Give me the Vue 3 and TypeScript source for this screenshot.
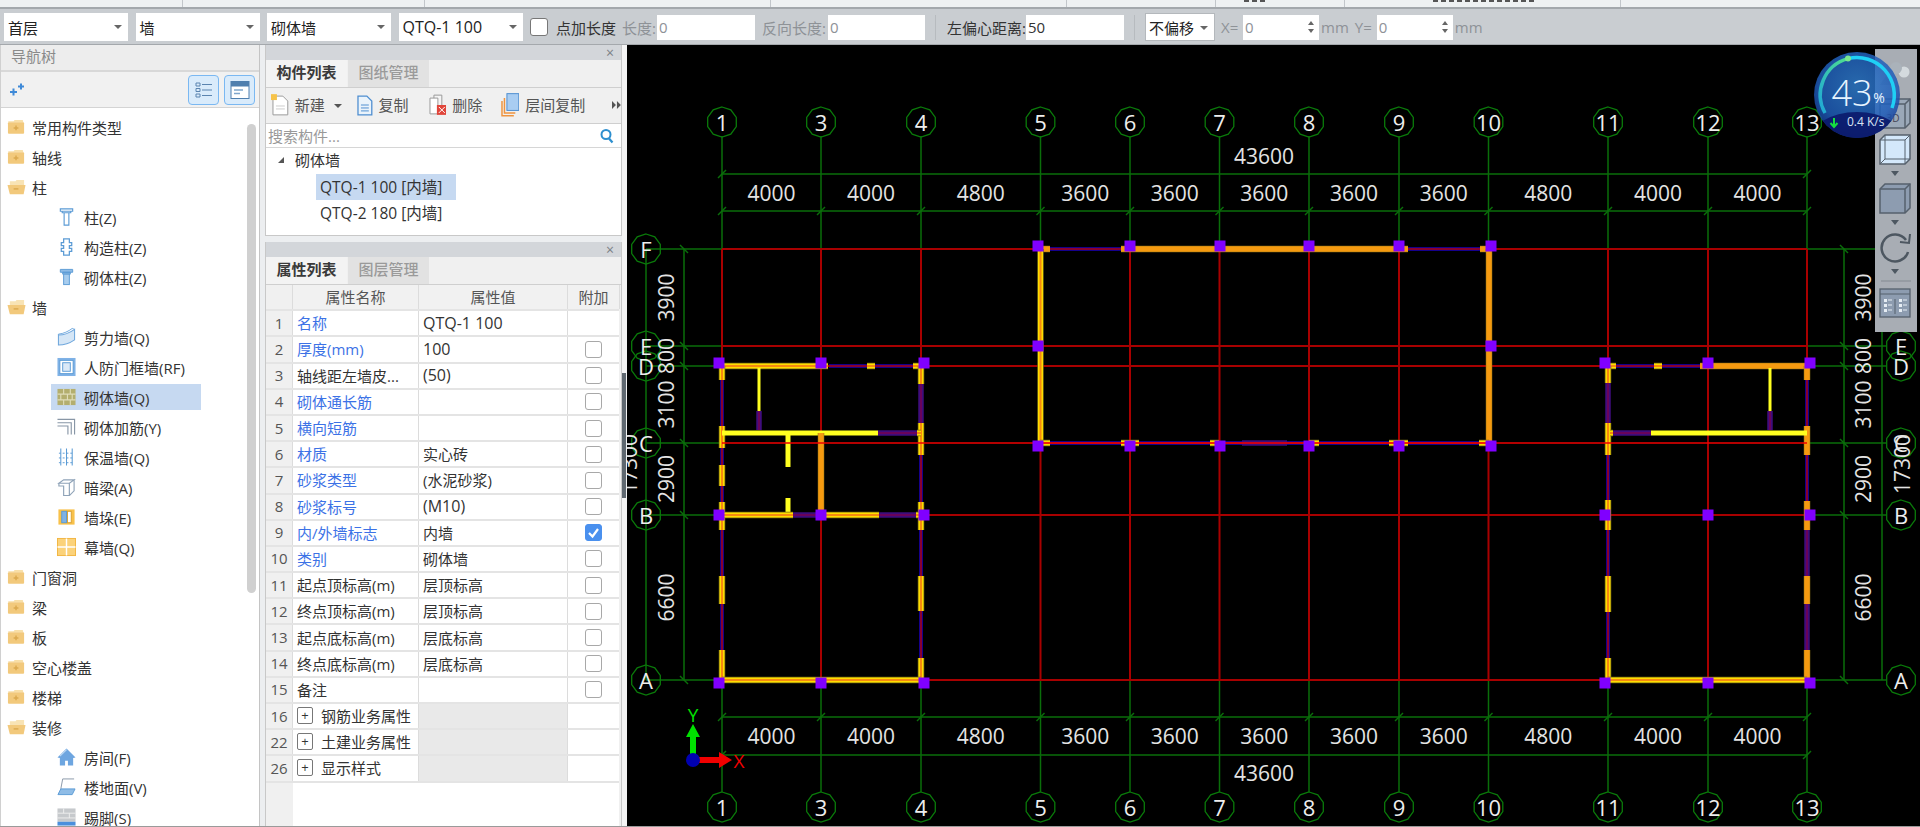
<script setup lang="ts">
interface TreeItem {
  label: string;
  icon: string;
  child?: boolean;
  active?: boolean;
}

interface PropRow {
  no: number;
  name: string;
  value?: string;
  latin?: boolean;
  link?: boolean;
  box?: boolean;
  checked?: boolean;
  group?: boolean;
}

type WallKind = "o" | "a" | "y" | "t" | "b" | "p";
type Wall = [WallKind, number, number, number, number];

const folderBase =
  '<path d="M1 5a1 1 0 0 1 1-1h5l1-1.500h8a1 1 0 0 1 1 1V5z" fill="#f8dfa8"/>';
const icons: Record<string, string> = {
  closed:
    folderBase +
    '<rect x="1" y="5" width="17" height="12" rx="1" fill="#f2c97c"/><path d="M7 11h5M9.500 8.500v5" stroke="#dba94e" stroke-width="1.500"/>',
  open:
    '<path d="M3 4h6l1-1.500h8V8H3z" fill="#f8e3b4"/><path d="M0.500 8h19l-2 9.500H3z" fill="#f2c97c"/><path d="M7 12h5" stroke="#dba94e" stroke-width="1.500"/>',
  col: '<path d="M3.500 1.500h13v2.500h-13zM5.500 4h9v1.500h-9zM7.500 5.500V18.500h5V5.500" fill="none" stroke="#5b9bd5" stroke-width="1.200"/>',
  gz: '<path d="M7 1.500h6v4h2.500v3H13v3h2.500v3H13v4H7v-4H4.500v-3H7v-3H4.500v-3H7z" fill="#fff" stroke="#5b9bd5" stroke-width="1.300"/>',
  qc: '<path d="M3.500 2h13v3h-13zM6 5h8v2H6z" fill="#8fbce6" stroke="#5b9bd5"/><rect x="7" y="7" width="6" height="11" fill="#a8cdee" stroke="#5b9bd5"/>',
  shear:
    '<path d="M1.500 8C7 8 13 6 18.500 2v11c-5 3.500-11 5.500-17 5.500z" fill="#d5e6f6" stroke="#6ea6dc" stroke-width="1.100"/><path d="M1.500 8v-1C7 6.500 12 4 16 1l2.500 1" fill="none" stroke="#6ea6dc"/>',
  rf: '<rect x="0.500" y="0.500" width="19" height="19" fill="#7fb2e6"/><rect x="3" y="3" width="14" height="14" fill="#fff" stroke="#5b9bd5"/><rect x="6" y="5.500" width="8" height="9" fill="#dbe9f7" stroke="#5b9bd5"/>',
  brick:
    '<rect x="0.500" y="1.500" width="19" height="17" fill="#b3ae6e"/><path d="M0.500 7h19M0.500 13h19M7 1.500V7M14 1.500V7M4 7v6M11 7v6M16 7v6M7 13v5.500M14 13v5.500" stroke="#dfdcb8" stroke-width="1.200"/>',
  rebar:
    '<path d="M0.500 2h18v16M0.500 5.500h14.500V18M0.500 9h11v9" fill="none" stroke="#8896a6" stroke-width="1.200"/>',
  insul:
    '<path d="M4 1v18M10 1v18M16 1v18" stroke="#5b9bd5" stroke-width="1.100"/><path d="M2 6h16M2 11h16M2 16h16" stroke="#5b9bd5" stroke-dasharray="2 2"/>',
  dark: '<path d="M2 6l5-3.500h11L13 6zM2 6h11v13H7V9H2zM13 6l5-3.500V14l-5 5" fill="#fff" stroke="#8fa3b8" stroke-width="1.200"/>',
  pier: '<rect x="1.500" y="2" width="17" height="16" fill="#f8c14a"/><rect x="5" y="4" width="5" height="12" fill="#7fb2e6" stroke="#5b9bd5"/><rect x="11" y="4" width="4" height="12" fill="#fff" stroke="#d9a030"/>',
  curtain:
    '<rect x="0.500" y="1" width="19" height="18" fill="#fbd27a" stroke="#f2b53e"/><path d="M10 1v18M0.500 10h19" stroke="#fff" stroke-width="1.500"/>',
  room: '<path d="M10 1L0.500 10.500 3 11V19h5.500v-5h3v5H17v-8l2.500-.500z" fill="#6ea6e0"/><path d="M3 9l7-7" stroke="#b9d6f2" stroke-width="1.500"/>',
  floor:
    '<path d="M6 1.500h12M6 1.500L4 12" fill="none" stroke="#8896a6"/><path d="M4 12h15l-3 6H1z" fill="#8fbce6" stroke="#5b9bd5"/>',
  skirt:
    '<rect x="0.500" y="1" width="19" height="14" fill="#c6c9cc"/><path d="M0.500 6h19M0.500 11h19M7 1v5M13 6v5" stroke="#eee"/><rect x="0.500" y="15" width="19" height="4" fill="#4a8fdc"/>',
};

const tree: TreeItem[] = [
  { label: "常用构件类型", icon: "closed" },
  { label: "轴线", icon: "closed" },
  { label: "柱", icon: "open" },
  { label: "柱(Z)", icon: "col", child: true },
  { label: "构造柱(Z)", icon: "gz", child: true },
  { label: "砌体柱(Z)", icon: "qc", child: true },
  { label: "墙", icon: "open" },
  { label: "剪力墙(Q)", icon: "shear", child: true },
  { label: "人防门框墙(RF)", icon: "rf", child: true },
  { label: "砌体墙(Q)", icon: "brick", child: true, active: true },
  { label: "砌体加筋(Y)", icon: "rebar", child: true },
  { label: "保温墙(Q)", icon: "insul", child: true },
  { label: "暗梁(A)", icon: "dark", child: true },
  { label: "墙垛(E)", icon: "pier", child: true },
  { label: "幕墙(Q)", icon: "curtain", child: true },
  { label: "门窗洞", icon: "closed" },
  { label: "梁", icon: "closed" },
  { label: "板", icon: "closed" },
  { label: "空心楼盖", icon: "closed" },
  { label: "楼梯", icon: "closed" },
  { label: "装修", icon: "open" },
  { label: "房间(F)", icon: "room", child: true },
  { label: "楼地面(V)", icon: "floor", child: true },
  { label: "踢脚(S)", icon: "skirt", child: true },
];

const props: PropRow[] = [
  { no: 1, name: "名称", value: "QTQ-1 100", latin: true, link: true },
  { no: 2, name: "厚度(mm)", value: "100", latin: true, link: true, box: true },
  { no: 3, name: "轴线距左墙皮...", value: "(50)", latin: true, box: true },
  { no: 4, name: "砌体通长筋", link: true, box: true },
  { no: 5, name: "横向短筋", link: true, box: true },
  { no: 6, name: "材质", value: "实心砖", link: true, box: true },
  { no: 7, name: "砂浆类型", value: "(水泥砂浆)", link: true, box: true },
  { no: 8, name: "砂浆标号", value: "(M10)", latin: true, link: true, box: true },
  { no: 9, name: "内/外墙标志", value: "内墙", link: true, box: true, checked: true },
  { no: 10, name: "类别", value: "砌体墙", link: true, box: true },
  { no: 11, name: "起点顶标高(m)", value: "层顶标高", box: true },
  { no: 12, name: "终点顶标高(m)", value: "层顶标高", box: true },
  { no: 13, name: "起点底标高(m)", value: "层底标高", box: true },
  { no: 14, name: "终点底标高(m)", value: "层底标高", box: true },
  { no: 15, name: "备注", box: true },
  { no: 16, name: "钢筋业务属性", group: true },
  { no: 22, name: "土建业务属性", group: true },
  { no: 26, name: "显示样式", group: true },
];

// drawing coordinates are page pixels, the svg viewBox starts at the canvas corner
const axisX: [string, number][] = [
  ["1", 722], ["3", 821], ["4", 921], ["5", 1040.5], ["6", 1130], ["7", 1219.5],
  ["8", 1309], ["9", 1399], ["10", 1488.5], ["11", 1608], ["12", 1708], ["13", 1807],
];
const axisY: [string, number][] = [
  ["F", 249], ["E", 346], ["D", 366], ["C", 443], ["B", 515], ["A", 680],
];
const spansX = ["4000", "4000", "4800", "3600", "3600", "3600", "3600", "3600", "4800", "4000", "4000"];
const spansY = ["3900", "800", "3100", "2900", "6600"];

const dimX = spansX.map((label, i) => ({
  label,
  x: (axisX[i][1] + axisX[i + 1][1]) / 2,
}));
const dimY = spansY.map((label, i) => ({
  label,
  y: (axisY[i][1] + axisY[i + 1][1]) / 2,
}));

function bubble(cx: number, cy: number): string {
  const pts: string[] = [];
  for (let i = 0; i < 10; i++) {
    const a = (Math.PI * 2 * i) / 10 - Math.PI / 2;
    pts.push(`${(cx + 15 * Math.cos(a)).toFixed(1)},${(cy + 15 * Math.sin(a)).toFixed(1)}`);
  }
  return pts.join(" ");
}

const walls: Wall[] = [
  // left block
  ["o", 720, 366, 828, 366], ["b", 829, 366, 867, 366], ["o", 867, 366, 875, 366],
  ["b", 875, 366, 913, 366], ["o", 913, 366, 921, 366],
  ["o", 722, 366, 722, 380], ["b", 722, 380, 722, 426], ["o", 722, 426, 722, 448],
  ["b", 722, 448, 722, 465], ["o", 722, 465, 722, 486], ["b", 722, 486, 722, 502],
  ["o", 722, 502, 722, 530], ["b", 722, 530, 722, 576], ["o", 722, 576, 722, 604],
  ["b", 722, 604, 722, 650], ["o", 722, 650, 722, 680],
  ["o", 921, 366, 921, 384], ["p", 921, 384, 921, 423], ["o", 921, 423, 921, 455],
  ["b", 921, 455, 921, 502], ["o", 921, 502, 921, 530], ["b", 921, 530, 921, 576],
  ["o", 921, 576, 921, 611], ["b", 921, 611, 921, 658], ["o", 921, 658, 921, 680],
  ["y", 722, 433, 878, 433], ["p", 878, 433, 917, 433], ["o", 917, 433, 921, 433],
  ["t", 759, 368, 759, 411], ["p", 759, 411, 759, 430],
  ["y", 788, 433, 788, 467], ["y", 788, 498, 788, 515],
  ["a", 821, 433, 821, 515],
  ["o", 722, 515, 793, 515], ["p", 793, 515, 817, 515], ["o", 825, 515, 879, 515],
  ["p", 879, 515, 916, 515], ["o", 916, 515, 921, 515],
  ["o", 722, 680, 921, 680],
  // middle block
  ["a", 1040, 249, 1050, 249], ["b", 1050, 249, 1121, 249], ["a", 1121, 249, 1408, 249],
  ["b", 1408, 249, 1480, 249], ["a", 1480, 249, 1491, 249],
  ["o", 1040.5, 249, 1040.5, 443], ["a", 1489, 249, 1489, 443],
  ["b", 1040, 443, 1489, 443], ["o", 1040, 443, 1050, 443], ["o", 1121, 443, 1139, 443],
  ["o", 1210, 443, 1219, 443], ["p", 1242, 443, 1287, 443], ["o", 1309, 443, 1319, 443],
  ["o", 1389, 443, 1408, 443], ["o", 1479, 443, 1489, 443],
  // right block
  ["o", 1608, 366, 1616, 366], ["b", 1616, 366, 1654, 366], ["o", 1654, 366, 1662, 366],
  ["b", 1662, 366, 1700, 366], ["a", 1700, 366, 1809, 366],
  ["o", 1608, 366, 1608, 383], ["p", 1608, 383, 1608, 423], ["o", 1608, 423, 1608, 455],
  ["b", 1608, 455, 1608, 500], ["o", 1608, 500, 1608, 530], ["b", 1608, 530, 1608, 576],
  ["o", 1608, 576, 1608, 612], ["b", 1608, 612, 1608, 658], ["o", 1608, 658, 1608, 680],
  ["a", 1807, 366, 1807, 380], ["b", 1807, 380, 1807, 426], ["a", 1807, 426, 1807, 455],
  ["b", 1807, 455, 1807, 501], ["a", 1807, 501, 1807, 530], ["p", 1807, 530, 1807, 576],
  ["a", 1807, 576, 1807, 604], ["p", 1807, 604, 1807, 650], ["a", 1807, 650, 1807, 680],
  ["o", 1610, 433, 1613, 433], ["p", 1613, 433, 1651, 433], ["y", 1651, 433, 1807, 433],
  ["t", 1770, 368, 1770, 411], ["p", 1770, 411, 1770, 430],
  ["o", 1608, 680, 1807, 680],
];

// outer edge first, the core last; blue and purple keep the axis line visible through them
const wallStyle: Record<WallKind, [string, number][]> = {
  o: [["#7a7010", 6.5], ["#ffdc00", 5], ["#f58a10", 2]],
  a: [["#8a7014", 6.5], ["#f59a10", 5.5]],
  y: [["#ffff20", 5]],
  t: [["#ffff20", 3]],
  b: [["#14008c", 4], ["#b00010", 1.5]],
  p: [["#3f0d7d", 5.5], ["#7a0050", 1.5]],
};

const wallStrokes = walls.flatMap(([kind, x1, y1, x2, y2]) =>
  wallStyle[kind].map(([color, width]) => ({ x1, y1, x2, y2, color, width })),
);

const pillars: [number, number][] = [
  [1038, 246], [1130, 246], [1220, 246], [1309, 246], [1399, 246], [1491, 246],
  [1038, 346], [1491, 346],
  [1038, 446], [1130, 446], [1220, 446], [1309, 446], [1399, 446], [1491, 446],
  [719, 363], [821, 363], [924, 363], [719, 515], [821, 515], [924, 515],
  [719, 683], [821, 683], [924, 683],
  [1605, 363], [1708, 363], [1810, 363], [1605, 515], [1708, 515], [1810, 515],
  [1605, 683], [1708, 683], [1810, 683],
];
</script>

<template>
  <div class="app">
    <div class="topband">
      <i class="sep s1"></i><i class="sep s2"></i><i class="sep s3"></i><i class="sep s4"></i>
      <b class="clip c1"></b><i class="sep s5"></i><i class="sep s6"></i><b class="clip c2"></b><i class="sep s7"></i>
    </div>

    <div class="toolbar">
      <div class="combo">首层<span class="caret"></span></div>
      <div class="combo">墙<span class="caret"></span></div>
      <div class="combo">砌体墙<span class="caret"></span></div>
      <div class="combo wide-latin">QTQ-1 100<span class="caret"></span></div>
      <span class="tool-check"></span>
      <span class="lab point-lab">点加长度</span>
      <span class="lab off len-lab">长度:</span>
      <div class="field f98 off-val">0</div>
      <span class="lab off rev-lab">反向长度:</span>
      <div class="field f97 off-val">0</div>
      <i class="divider d1"></i>
      <span class="lab off-lab">左偏心距离:</span>
      <div class="field f98">50</div>
      <i class="divider d2"></i>
      <div class="combo small">不偏移<span class="caret"></span></div>
      <span class="lab off xy-lab">X=</span>
      <div class="field spin off-val">0<span class="spinner"><i></i><i></i></span></div>
      <span class="lab off mm-lab">mm</span>
      <span class="lab off xy-lab">Y=</span>
      <div class="field spin off-val">0<span class="spinner"><i></i><i></i></span></div>
      <span class="lab off mm-lab">mm</span>
    </div>

    <div class="main">
      <aside class="nav">
        <div class="nav-title">导航树</div>
        <div class="nav-tools">
          <svg class="sparkle" width="16" height="16" viewBox="0 0 16 16">
            <path d="M1 10h7M4.500 6.500v7M9 4.500h6M12 1.500v6" stroke="#3f8ad8" stroke-width="2" />
          </svg>
          <button class="view-btn first">
            <svg width="18" height="18" viewBox="0 0 18 18">
              <path
                d="M1 2h4v3H1zM1 7.500h4v3H1zM1 13h4v3H1zM7 3.500h10M7 9h10M7 14.500h10"
                fill="none"
                stroke="#5a84b0"
              />
            </svg>
          </button>
          <button class="view-btn">
            <svg width="20" height="20" viewBox="0 0 20 20">
              <rect x="1" y="1.500" width="18" height="17" fill="#fff" stroke="#4f7fae" />
              <rect x="1" y="1.500" width="18" height="5" fill="#4f7fae" />
              <path d="M4 10h9M4 13.500h6" stroke="#7fa6cc" stroke-width="1.500" />
            </svg>
          </button>
        </div>
        <div class="nav-tree">
          <div v-for="item in tree" :key="item.label" class="tree-row" :class="{ child: item.child }">
            <div class="tree-item" :class="{ active: item.active }">
              <svg class="tree-icon" viewBox="0 0 20 20" v-html="icons[item.icon]"></svg>
              <span>{{ item.label }}</span>
            </div>
          </div>
          <div class="scroll-thumb"></div>
        </div>
      </aside>

      <section class="side">
        <div class="panel list-panel">
          <div class="panel-head">×</div>
          <div class="tabs">
            <span class="tab on">构件列表</span>
            <span class="tab">图纸管理</span>
          </div>
          <div class="list-tools">
            <svg class="t-new" width="18" height="22" viewBox="0 0 18 22">
              <path d="M2 2h10l5 5v14H2z" fill="#fff" stroke="#9a9a9a" />
              <path d="M5 12h9M5 15h9" stroke="#ccc" />
              <rect x="0" y="0" width="6" height="6" fill="#f6c34a" />
            </svg>
            <span class="tool-text">新建</span>
            <span class="caret dark"></span>
            <svg class="t-copy" width="16" height="22" viewBox="0 0 16 22">
              <path d="M1 2h9l5 5v14H1z" fill="#eaf3fb" stroke="#4f8ed0" stroke-width="1.300" />
              <path d="M4 11h8M4 14h8M4 17h8" stroke="#4f8ed0" />
            </svg>
            <span class="tool-text">复制</span>
            <svg class="t-del" width="18" height="22" viewBox="0 0 18 22">
              <path d="M5 1h8v15H5z" fill="#f4f4f4" stroke="#999" />
              <path d="M1 4h8v16H1z" fill="#fff" stroke="#999" />
              <rect x="8" y="11" width="10" height="10" fill="#e0453a" />
              <path d="M10 13l6 6M16 13l-6 6" stroke="#fff" />
            </svg>
            <span class="tool-text">删除</span>
            <svg class="t-floor" width="18" height="24" viewBox="0 0 18 24">
              <path d="M1 8v15h12" fill="none" stroke="#ee9440" stroke-width="1.500" />
              <path d="M3.500 5v15h11" fill="none" stroke="#ee9440" stroke-width="1.500" />
              <rect x="6" y="0.500" width="12" height="17" fill="#a9cdf2" stroke="#4f8ed0" />
            </svg>
            <span class="tool-text">层间复制</span>
            <svg class="more" width="9" height="8" viewBox="0 0 9 8">
              <path d="M0 0l4 4-4 4zM5 0l4 4-4 4z" fill="#555" />
            </svg>
          </div>
          <div class="search">
            <span>搜索构件...</span>
            <svg width="14" height="16" viewBox="0 0 14 16">
              <circle cx="6" cy="6.500" r="4.500" fill="none" stroke="#2d8fcf" stroke-width="2" />
              <path d="M9 10.500l3.500 4" stroke="#2d8fcf" stroke-width="2.200" />
            </svg>
          </div>
          <div class="list-tree">
            <div class="list-parent"><span class="tri"></span>砌体墙</div>
            <div class="list-row sel">QTQ-1 100 [内墙]</div>
            <div class="list-row">QTQ-2 180 [内墙]</div>
          </div>
        </div>

        <div class="panel prop-panel">
          <div class="panel-head">×</div>
          <div class="tabs">
            <span class="tab on">属性列表</span>
            <span class="tab">图层管理</span>
          </div>
          <div class="prop-table">
            <div class="prop-row head">
              <div class="no"></div>
              <div>属性名称</div>
              <div>属性值</div>
              <div>附加</div>
            </div>
            <div v-for="row in props" :key="row.no" class="prop-row">
              <div class="no">{{ row.no }}</div>
              <div class="name" :class="{ link: row.link }">
                <span v-if="row.group" class="plus">+</span>{{ row.name }}
              </div>
              <div class="val" :class="{ grouped: row.group, latin: row.latin }">{{ row.value }}</div>
              <div class="add">
                <span v-if="row.box" class="box" :class="{ checked: row.checked }">
                  <svg v-if="row.checked" width="13" height="13" viewBox="0 0 13 13">
                    <path d="M2 7l3.500 3.500L11 3" fill="none" stroke="#fff" stroke-width="2.200" />
                  </svg>
                </span>
              </div>
            </div>
            <div class="prop-fill"></div>
          </div>
        </div>
      </section>

      <div class="splitter"><i></i></div>

      <div class="canvas">
        <svg class="drawing" width="1293" height="781" viewBox="627 45 1293 781">
          <g class="green">
            <template v-for="[name, x] in axisX" :key="name">
              <line :x1="x" y1="136" :x2="x" y2="249" />
              <line :x1="x" y1="680" :x2="x" y2="792" />
              <path :d="`M${x - 4} 215l8 -8`" />
              <path :d="`M${x - 4} 721l8 -8`" />
            </template>
            <template v-for="[name, y] in axisY" :key="name">
              <line x1="646" :y1="y" x2="722" :y2="y" />
              <line x1="1807" :y1="y" x2="1886" :y2="y" />
              <path :d="`M680 ${y - 4}l8 8`" />
              <path :d="`M1840 ${y - 4}l8 8`" />
            </template>
            <line x1="722" y1="174" x2="1807" y2="174" />
            <line x1="722" y1="211" x2="1807" y2="211" />
            <line x1="722" y1="717" x2="1807" y2="717" />
            <line x1="722" y1="755" x2="1807" y2="755" />
            <line x1="646" y1="249" x2="646" y2="680" />
            <line x1="684" y1="249" x2="684" y2="680" />
            <line x1="1844" y1="249" x2="1844" y2="680" />
            <line x1="1882" y1="249" x2="1882" y2="680" />
            <path d="M718 178l8 -8M1803 178l8 -8M718 759l8 -8M1803 759l8 -8" />
          </g>

          <g class="red">
            <line v-for="[name, x] in axisX" :key="name" :x1="x" y1="249" :x2="x" y2="680" />
            <line x1="722" y1="249" x2="1807" y2="249" />
            <line x1="722" y1="346" x2="1807" y2="346" />
            <line x1="722" y1="366" x2="1807" y2="366" />
            <line x1="722" y1="515" x2="1807" y2="515" />
            <line x1="924" y1="680" x2="1605" y2="680" />
          </g>

          <line
            v-for="(w, i) in wallStrokes"
            :key="i"
            :x1="w.x1"
            :y1="w.y1"
            :x2="w.x2"
            :y2="w.y2"
            :stroke="w.color"
            :stroke-width="w.width"
          />

          <line class="axis-bright" x1="722" y1="443" x2="1807" y2="443" />

          <rect
            v-for="[x, y] in pillars"
            :key="`${x}-${y}`"
            class="pillar"
            :x="x - 5.5"
            :y="y - 5.5"
            width="11"
            height="11"
          />

          <g class="bubbles">
            <template v-for="[name, x] in axisX" :key="name">
              <polygon :points="bubble(x, 122)" />
              <polygon :points="bubble(x, 807)" />
            </template>
            <template v-for="[name, y] in axisY" :key="name">
              <polygon :points="bubble(646, y)" />
              <polygon :points="bubble(1901, y)" />
            </template>
          </g>

          <g class="dim">
            <template v-for="[name, x] in axisX" :key="name">
              <text class="tag" :x="x" y="122">{{ name }}</text>
              <text class="tag" :x="x" y="807">{{ name }}</text>
            </template>
            <template v-for="[name, y] in axisY" :key="name">
              <text class="tag" x="646" :y="y">{{ name }}</text>
              <text class="tag" x="1901" :y="y">{{ name }}</text>
            </template>
            <text x="1264" y="156">43600</text>
            <text x="1264" y="773">43600</text>
            <template v-for="d in dimX" :key="d.x">
              <text :x="d.x" y="193">{{ d.label }}</text>
              <text :x="d.x" y="736">{{ d.label }}</text>
            </template>
            <template v-for="d in dimY" :key="d.y">
              <text :transform="`translate(666 ${d.y}) rotate(-90)`">{{ d.label }}</text>
              <text :transform="`translate(1863 ${d.y}) rotate(-90)`">{{ d.label }}</text>
            </template>
            <text transform="translate(629 464) rotate(-90)">17300</text>
            <text transform="translate(1902 464) rotate(-90)">17300</text>
          </g>

          <g class="ucs">
            <path d="M690 760v-23h-4l7 -13 7 13h-4v23z" fill="#00e000" />
            <path d="M693 757h26v-5l13 8 -13 8v-5h-26z" fill="#f00000" />
            <circle cx="693" cy="760" r="7" fill="#0000b0" />
            <text class="axis-y" x="693" y="715">Y</text>
            <text class="axis-x" x="739" y="761">X</text>
          </g>
        </svg>

        <div class="view-tools">
          <svg width="42" height="283" viewBox="0 0 42 283">
            <circle cx="29" cy="23" r="5.500" fill="#d4dade" />
            <circle cx="21" cy="19" r="6" fill="#aab2ba" />
            <path d="M5 36l6 -9 6 9z" fill="#8f979f" />
            <path d="M5 79V55l5 -5h25v24l-5 5z" fill="#9aa8b8" stroke="#55606c" stroke-width="1.500" />
            <path d="M5 55h25v24M30 55l5 -5" fill="none" stroke="#55606c" stroke-width="1.500" />
            <text class="mini" x="18" y="73">3D</text>
            <path d="M5 115V91l5 -5h25v24l-5 5z" fill="#d4e8fb" stroke="#55606c" stroke-width="1.500" />
            <path d="M5 91h25v24M30 91l5 -5M10 86v24h25M5 115l5 -5" fill="none" stroke="#55606c" />
            <path d="M16 122h8l-4 5z" fill="#4d5761" />
            <path d="M5 164V140l5 -5h25v24l-5 5z" fill="#8d9cb0" stroke="#55606c" stroke-width="1.500" />
            <path d="M5 140h25v24M30 140l5 -5" fill="none" stroke="#55606c" stroke-width="1.500" />
            <path d="M16 171h8l-4 5z" fill="#4d5761" />
            <path d="M31 191A13.500 13.500 0 1 0 33 203" fill="none" stroke="#4d5761" stroke-width="2.500" />
            <path d="M25 193l9 1 1 -9" fill="none" stroke="#4d5761" stroke-width="2" />
            <path d="M16 220h8l-4 5z" fill="#4d5761" />
            <path d="M6 232h30" stroke="#838a91" />
            <rect x="5" y="240" width="30" height="28" fill="#8d9cb0" stroke="#55606c" stroke-width="1.300" />
            <path d="M5 245h30M20 250v15" stroke="#55606c" />
            <path d="M9 250h3v3H9zM9 255h3v3H9zM9 260h3v3H9zM24 250h3v3h-3zM24 255h3v3h-3zM24 260h3v3h-3z" fill="#e6edf4" />
            <path d="M13 251h4M13 256h4M13 261h4M28 251h4M28 256h4M28 261h4" stroke="#e6edf4" />
          </svg>
        </div>

        <svg class="speed" width="90" height="90" viewBox="0 0 90 90">
          <defs>
            <radialGradient id="ballFill" cx="50%" cy="40%" r="60%">
              <stop offset="0%" stop-color="#2f7ccb" />
              <stop offset="75%" stop-color="#1f5cb8" />
              <stop offset="100%" stop-color="#163c94" />
            </radialGradient>
            <linearGradient id="ringLeft" x1="0" y1="1" x2="1" y2="0">
              <stop offset="0%" stop-color="#1fa7d8" />
              <stop offset="100%" stop-color="#50e08c" />
            </linearGradient>
            <clipPath id="ballClip"><circle cx="45" cy="45" r="43" /></clipPath>
          </defs>
          <circle cx="45" cy="45" r="43" fill="url(#ballFill)" opacity="0.85" />
          <ellipse cx="45" cy="92" rx="48" ry="30" fill="#0b1a6b" opacity="0.9" clip-path="url(#ballClip)" />
          <path d="M13 63A37.500 37.500 0 0 1 36 8.600" fill="none" stroke="url(#ringLeft)" stroke-width="3.500" />
          <path d="M36 8.600A37.500 37.500 0 0 1 80 58" fill="none" stroke="#1fd0f5" stroke-width="3.500" />
          <circle cx="36" cy="8.600" r="3" fill="#7be88e" />
          <text class="pct" x="40" y="42">43</text>
          <text class="pct-sign" x="67" y="53">%</text>
          <path d="M22 68v8M18.500 73l3.500 4 3.500 -4" fill="none" stroke="#16e040" stroke-width="2" />
          <text class="rate" x="35" y="76">0.4 K/s</text>
        </svg>
      </div>
    </div>
  </div>
</template>

<style scoped>
.app {
  width: 1920px;
  height: 827px;
  overflow: hidden;
  display: flex;
  flex-direction: column;
  background: #eceef0;
  font-family: "Open Sans", "Noto Sans CJK SC", sans-serif;
  font-size: 15px;
  color: #333;
}

.topband {
  height: 7px;
  flex: none;
  position: relative;
  background: #eef1f2;
  border-bottom: 2px solid #a3a8ac;
}

.sep {
  position: absolute;
  top: 0;
  width: 1px;
  height: 7px;
  background: #c2c6ca;
}
.s1 { left: 182px; }
.s2 { left: 424px; }
.s3 { left: 770px; }
.s4 { left: 1066px; }
.s5 { left: 1215px; }
.s6 { left: 1344px; }
.s7 { left: 1620px; }

.clip {
  position: absolute;
  top: 0;
  height: 2px;
  background: repeating-linear-gradient(90deg, #555 0 5px, transparent 5px 8px);
}
.c1 { left: 1244px; width: 24px; }
.c2 { left: 1433px; width: 102px; }

.toolbar {
  height: 36px;
  flex: none;
  box-sizing: border-box;
  display: flex;
  align-items: center;
  padding: 1px 0 0 4px;
  background: #c9cdd1;
  border-bottom: 1px solid #a4a8ac;
}

.combo {
  width: 124px;
  height: 28px;
  margin-right: 7.5px;
  padding-left: 4px;
  box-sizing: border-box;
  position: relative;
  display: flex;
  align-items: center;
  background: #fff;
  color: #222;
}
.combo.wide-latin { font-size: 16px; }

.combo.small {
  width: 70px;
  margin: 0 6px 0 0;
  padding-left: 3px;
  border: 1px solid #b4b8bc;
}

.caret {
  position: absolute;
  right: 6px;
  top: 12px;
  border: 4px solid transparent;
  border-top: 4px solid #666;
  border-bottom: 0;
}

.caret.dark {
  position: static;
  margin: 2px 15px 0 9px;
  border-top-color: #555;
}

.tool-check {
  width: 16px;
  height: 16px;
  border: 1px solid #777;
  border-radius: 3px;
  background: #fff;
}

.lab { white-space: nowrap; color: #333; }
.lab.off { color: #8e9297; }
.point-lab { margin-left: 8px; }
.len-lab { margin-left: 6px; width: 35px; }
.rev-lab { margin-left: 7px; width: 66px; }
.off-lab { width: 79px; }
.xy-lab { margin-right: 2px; width: 20px; }
.mm-lab { margin-left: 2px; margin-right: 6px; }

.field {
  height: 25px;
  box-sizing: border-box;
  padding-left: 2px;
  display: flex;
  align-items: center;
  position: relative;
  background: #fff;
}
.f98 { width: 98px; }
.f97 { width: 97px; }
.off-val { color: #8e9297; }
.spin { width: 76px; }

.spinner {
  position: absolute;
  right: 5px;
  top: 6px;
  display: flex;
  flex-direction: column;
  gap: 4px;
}
.spinner i {
  border: 3.5px solid transparent;
  border-bottom: 4px solid #666;
  border-top: 0;
}
.spinner i + i {
  border-bottom: 0;
  border-top: 4px solid #666;
}

.divider {
  width: 1px;
  height: 25px;
  background: #b7bbbf;
}
.d1 { margin: 0 11px 0 10px; }
.d2 { margin: 0 10px 0 10px; }

.main {
  flex: 1;
  display: flex;
  min-height: 0;
  border-bottom: 1px solid #9a9a9a;
}

.nav {
  width: 260px;
  flex: none;
  display: flex;
  flex-direction: column;
  box-sizing: border-box;
  background: #fff;
  border-left: 1px solid #d0d0d0;
  border-right: 1px solid #c4c4c4;
}

.nav-title {
  height: 25px;
  padding-left: 10px;
  line-height: 23px;
  color: #8a8a8a;
  background: #ededed;
  border-bottom: 2px solid #d8d8d8;
}

.nav-tools {
  height: 35px;
  display: flex;
  align-items: center;
  padding: 0 4px 0 8px;
  background: #f1f1f1;
  border-bottom: 1px solid #d4d4d4;
}

.view-btn {
  width: 31px;
  height: 30px;
  padding: 0;
  display: flex;
  align-items: center;
  justify-content: center;
  background: #d9ebfb;
  border: 1px solid #7ab8f2;
  border-radius: 4px;
  margin-left: 5px;
}
.view-btn.first { margin-left: auto; }

.nav-tree {
  flex: 1;
  min-height: 0;
  padding-top: 4px;
  overflow: hidden;
  position: relative;
}

.tree-row {
  height: 30px;
  display: flex;
  align-items: center;
  padding-left: 6px;
}
.tree-row.child { padding-left: 50px; }

.tree-item {
  height: 26px;
  display: flex;
  align-items: center;
  white-space: nowrap;
}
.child .tree-item {
  width: 150px;
  padding-left: 6px;
  box-sizing: border-box;
}
.tree-item.active { background: #c6d9f1; }

.tree-icon {
  width: 19px;
  height: 20px;
  flex: none;
  margin-right: 6px;
}
.child .tree-icon { margin-right: 8px; }

.scroll-thumb {
  position: absolute;
  left: 246px;
  top: 16px;
  width: 9px;
  height: 469px;
  border-radius: 5px;
  background: #d0d0d0;
}

.side {
  width: 357px;
  flex: none;
  margin-left: 5px;
  display: flex;
  flex-direction: column;
  gap: 6px;
}

.panel {
  background: #f0f0f0;
  border-left: 1px solid #c8c8c8;
  border-right: 1px solid #c8c8c8;
}
.list-panel { height: 190px; flex: none; border-bottom: 1px solid #c8c8c8; }
.prop-panel { flex: 1; min-height: 0; display: flex; flex-direction: column; }

.panel-head {
  height: 15px;
  padding-right: 7px;
  text-align: right;
  line-height: 15px;
  color: #7c8086;
  font-size: 14px;
  background: #d3d6da;
}

.tabs {
  height: 27px;
  flex: none;
  display: flex;
  background: #f0f0f0;
  border-bottom: 1px solid #cfcfcf;
}

.tab {
  width: 81px;
  margin-right: 1px;
  line-height: 25px;
  text-align: center;
  color: #9a9a9a;
  font-weight: 500;
  background: #e2e2e2;
}
.tab.on { color: #3a3a3a; background: #f3f3f3; font-weight: 700; }

.list-tools {
  height: 36px;
  box-sizing: border-box;
  display: flex;
  align-items: center;
  padding: 0 0 1px 5px;
  background: #f0f0f0;
  border-bottom: 1px solid #cfcfcf;
  color: #555;
}
.tool-text { margin-left: 6px; padding-bottom: 2px; white-space: nowrap; }
.t-del { margin-left: 20px; }
.t-floor { margin-left: 19px; }
.more { margin-left: 27px; }

.search {
  height: 24px;
  box-sizing: border-box;
  display: flex;
  align-items: center;
  justify-content: space-between;
  padding: 0 7px 0 2px;
  color: #999;
  background: #fff;
  border-bottom: 1px solid #d6d6d6;
}

.list-tree {
  height: 87px;
  box-sizing: border-box;
  background: #fff;
}

.list-parent {
  height: 26px;
  box-sizing: border-box;
  display: flex;
  align-items: center;
  padding: 0 0 3px 29px;
  color: #333;
}
.tri {
  width: 0;
  height: 0;
  margin-left: -17px;
  margin-right: 11px;
  border-left: 6px solid transparent;
  border-bottom: 6px solid #555;
}

.list-row {
  width: 140px;
  height: 26px;
  margin-left: 50px;
  padding-left: 4px;
  box-sizing: border-box;
  line-height: 26px;
  white-space: nowrap;
  font-size: 15.5px;
}
.list-row.sel { background: #c6d9f1; }

.prop-table {
  flex: 1;
  min-height: 0;
  display: flex;
  flex-direction: column;
  background: #fff;
  margin-right: 2px;
}

.prop-row {
  height: 26.2px;
  flex: none;
  box-sizing: border-box;
  display: grid;
  grid-template-columns: 27px 126px 149px 52px;
  border-bottom: 2px solid #e4e4e4;
}
.prop-row > div {
  display: flex;
  align-items: center;
  padding-left: 4px;
  padding-bottom: 1px;
  box-sizing: border-box;
  border-right: 1px solid #dcdcdc;
  white-space: nowrap;
  overflow: hidden;
}
.prop-row.head { color: #555; background: #f1f1f1; }
.prop-row.head > div { justify-content: center; padding-left: 0; }

.prop-row > .no {
  justify-content: center;
  padding-left: 0;
  color: #555;
  background: #f0f0f0;
}

.name.link { color: #3c72e6; }
.val.latin { font-size: 16px; }
.val.grouped { background: #e9e9e9; }
.prop-row > .add { justify-content: center; padding: 0 2px 0 0; border-right: 0; }

.plus {
  width: 14px;
  height: 15px;
  margin-right: 8px;
  flex: none;
  display: flex;
  align-items: center;
  justify-content: center;
  border: 1px solid #777;
  border-radius: 2px;
  font-size: 13px;
  line-height: 1;
}

.box {
  width: 15px;
  height: 15px;
  display: flex;
  align-items: center;
  justify-content: center;
  border: 1px solid #a8a8a8;
  border-radius: 3px;
  background: #fff;
}
.box.checked { border-color: #4a90ee; background: #4a90ee; }

.prop-fill {
  width: 27px;
  flex: 1;
  background: #f0f0f0;
}

.splitter {
  width: 5px;
  flex: none;
  background: #f4f4f4;
  padding-top: 328px;
  box-sizing: border-box;
}
.splitter i {
  display: block;
  width: 4px;
  height: 125px;
  background: #5f6870;
}

.canvas {
  flex: 1;
  position: relative;
  overflow: hidden;
  background: #000;
}

.drawing { display: block; }

.green line,
.green path { stroke: #0a6e0a; stroke-width: 1.5; }

.red line { stroke: #a80000; stroke-width: 2; }
.axis-bright { stroke: #f00000; stroke-width: 1.5; }

.pillar { fill: #8000ff; }

.bubbles polygon { fill: none; stroke: #0a7a0a; stroke-width: 1.3; }

.dim text {
  font-size: 21px;
  fill: #e4e4e4;
  text-anchor: middle;
  dominant-baseline: central;
}
.dim .tag { font-size: 22px; fill: #eee; }

.ucs text {
  font-size: 19px;
  text-anchor: middle;
  dominant-baseline: central;
}
.axis-x { fill: #f00000; }
.axis-y { fill: #00e000; }

.view-tools {
  position: absolute;
  left: 1248px;
  top: 4px;
  width: 42px;
  height: 283px;
  background: #a8adb4;
}
.view-tools svg { display: block; }
.mini { font-size: 10px; fill: #445; text-anchor: middle; }

.speed {
  position: absolute;
  left: 1185px;
  top: 5px;
}
.pct {
  font-weight: 300;
  font-size: 36px;
  fill: #e8f4ff;
  text-anchor: middle;
  dominant-baseline: central;
}
.pct-sign { font-size: 14px; fill: #e8f4ff; text-anchor: middle; }
.rate { font-size: 12px; fill: #d8e4f4; }
</style>
